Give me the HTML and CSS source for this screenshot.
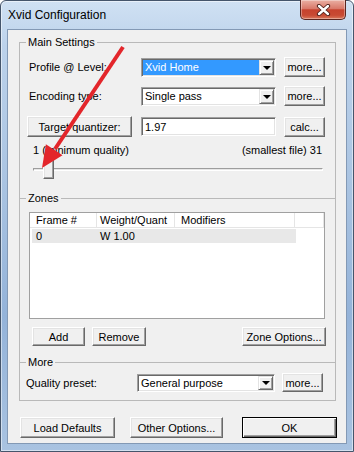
FILE: index.html
```html
<!DOCTYPE html>
<html lang="en">
  <head>
    <meta charset="utf-8" />
    <title>Xvid Configuration</title>
    <link rel="stylesheet" href="styles.css">
  </head>
  <body>
    <div class="window">
      <div class="titlebar">
        <span class="title">Xvid Configuration</span>
        <button class="close" aria-label="Close">
          <svg width="15" height="12" viewBox="0 0 15 12">
            <path d="M3 2 L12 10 M12 2 L3 10" stroke="#4a1e18" stroke-width="4.2" stroke-linecap="round" fill="none" />
            <path d="M3 2 L12 10 M12 2 L3 10" stroke="#ffffff" stroke-width="2.4" stroke-linecap="round" fill="none" />
          </svg>
        </button>
      </div>

      <div class="client">
        <fieldset class="group main">
          <legend>Main Settings</legend>
          <div class="row first">
            <span class="label">Profile @ Level:</span>
            <div class="combo selected">
              <span class="combo-value">Xvid Home</span>
              <span class="combo-drop"></span>
            </div>
            <button class="btn side">more...</button>
          </div>
          <div class="row">
            <span class="label">Encoding type:</span>
            <div class="combo">
              <span class="combo-value">Single pass</span>
              <span class="combo-drop"></span>
            </div>
            <button class="btn side">more...</button>
          </div>
          <div class="row quant-row">
            <button class="btn quant">Target quantizer:</button>
            <input class="field" type="text" value="1.97" />
            <button class="btn side">calc...</button>
          </div>
          <div class="range-labels">
            <span>1 (minimum quality)</span>
            <span>(smallest file) 31</span>
          </div>
          <div class="slider">
            <div class="track"></div>
            <div class="thumb"></div>
          </div>
        </fieldset>

        <fieldset class="group zones">
          <legend>Zones</legend>
          <div class="list">
            <div class="list-head">
              <span>Frame #</span>
              <span class="col-2">Weight/Quant</span>
              <span class="col-3">Modifiers</span>
              <span></span>
            </div>
            <div class="list-row">
              <span>0</span>
              <span class="col-2">W 1.00</span>
              <span></span>
            </div>
          </div>
          <div class="zone-actions">
            <button class="btn add">Add</button>
            <button class="btn remove">Remove</button>
            <button class="btn zone-options">Zone Options...</button>
          </div>
        </fieldset>

        <fieldset class="group more">
          <legend>More</legend>
          <div class="row preset-row">
            <span class="label">Quality preset:</span>
            <div class="combo">
              <span class="combo-value">General purpose</span>
              <span class="combo-drop"></span>
            </div>
            <button class="btn side">more...</button>
          </div>
        </fieldset>

        <div class="footer">
          <button class="btn load">Load Defaults</button>
          <button class="btn other">Other Options...</button>
          <button class="btn ok">OK</button>
        </div>
      </div>

      <!-- annotation arrow drawn over the dialog -->
      <svg class="arrow" width="354" height="452" viewBox="0 0 354 452">
        <line x1="123" y1="47" x2="55" y2="149" stroke="#e3262b" stroke-width="4" />
        <polygon points="42,168 62.5,155.2 45.9,144.2" fill="#e3262b" />
      </svg>
    </div>
  </body>
</html>
```

FILE: styles.css
```css
* {
  margin: 0;
  padding: 0;
  box-sizing: border-box;
}
body {
  width: 354px;
  height: 452px;
  overflow: hidden;
  background: #ffffff;
  font-family: "Liberation Sans", Arial, sans-serif;
  font-size: 11px;
  color: #000000;
}
button,
input {
  font: inherit;
  color: inherit;
}

/* window frame */
.window {
  position: relative;
  width: 354px;
  height: 452px;
  display: flex;
  flex-direction: column;
  padding: 0 6px 7px;
  border: 1px solid #45556b;
  border-radius: 6px 6px 0 0;
  background: linear-gradient(180deg, #d0e1f3 0%, #bcd2eb 10%, #aac4e2 40%, #94b3d9 70%, #a9c3e1 100%);
  box-shadow: inset 0 0 0 1px rgba(255, 255, 255, 0.5);
}
.titlebar {
  height: 28px;
  flex-shrink: 0;
  display: flex;
  align-items: flex-start;
}
.title {
  margin: 7px 0 0 1px;
  font-size: 12px;
  line-height: 14px;
}
.close {
  margin: -1px 1px 0 auto;
  width: 46px;
  height: 20px;
  display: flex;
  align-items: center;
  justify-content: center;
  border: 1px solid #5a2620;
  border-top: none;
  border-radius: 0 0 5px 5px;
  background: linear-gradient(180deg, #eab0a3 0%, #d9796a 45%, #c6432e 52%, #c84a33 80%, #d9785c 100%);
  box-shadow: inset 0 0 0 1px rgba(255, 255, 255, 0.35);
}

.client {
  flex: 1;
  display: flex;
  flex-direction: column;
  padding: 6px 10px 0 11px;
  border: 1px solid #8399b5;
  background: #f0f0f0;
}

/* group boxes */
.group {
  min-width: 0;
  padding: 0 10px 0 9px;
  border: 1px solid #b9b9b9;
  border-bottom: none;
}
.group legend {
  margin-left: -3px;
  padding: 0 2px;
  line-height: 13px;
}
.main {
  padding-bottom: 18px;
}
.zones {
  margin-top: -6px;
  padding-bottom: 16px;
}
.more {
  margin-top: -6px;
  padding-bottom: 8px;
  border-bottom: 1px solid #b9b9b9;
}

/* rows */
.row {
  display: flex;
  align-items: center;
  height: 20px;
  margin-top: 9px;
}
.row.first {
  margin-top: 8px;
}
.quant-row {
  height: 21px;
  margin-top: 10px;
}
.label {
  width: 112px;
  flex-shrink: 0;
}

/* classic controls */
.btn {
  height: 20px;
  flex-shrink: 0;
  background: #f0f0f0;
  border: 1px solid;
  border-color: #ffffff #696969 #696969 #ffffff;
  box-shadow: inset -1px -1px #a0a0a0, inset 1px 1px #e3e3e3;
  text-align: center;
  cursor: pointer;
}
.side {
  width: 41px;
  margin-left: 8px;
}
.quant {
  width: 105px;
  height: 21px;
  margin: 0 9px 0 -2px;
}

.combo {
  width: 135px;
  height: 19px;
  flex-shrink: 0;
  display: flex;
  padding: 1px;
  background: #ffffff;
  border: 1px solid;
  border-color: #a0a0a0 #ffffff #ffffff #a0a0a0;
  box-shadow: inset 1px 1px #696969, inset -1px -1px #e3e3e3;
}
.combo-value {
  flex: 1;
  padding-left: 2px;
  line-height: 15px;
}
.combo.selected .combo-value {
  background: #3399ff;
  color: #ffffff;
}
.combo-drop {
  width: 15px;
  display: flex;
  align-items: center;
  justify-content: center;
  background: #f0f0f0;
  border: 1px solid;
  border-color: #e3e3e3 #696969 #696969 #e3e3e3;
  box-shadow: inset 1px 1px #ffffff, inset -1px -1px #a0a0a0;
}
.combo-drop::after {
  content: "";
  border-left: 4px solid transparent;
  border-right: 4px solid transparent;
  border-top: 4px solid #000000;
  margin-top: 1px;
}

.field {
  width: 135px;
  height: 19px;
  padding: 0 3px;
  background: #ffffff;
  border: 1px solid;
  border-color: #a0a0a0 #ffffff #ffffff #a0a0a0;
  box-shadow: inset 1px 1px #696969, inset -1px -1px #e3e3e3;
  outline: none;
}

/* quality slider */
.range-labels {
  display: flex;
  justify-content: space-between;
  margin-top: 6px;
  padding: 0 3px 0 4px;
  line-height: 14px;
}
.slider {
  position: relative;
  height: 21px;
  margin: 2px 2px 0 4px;
}
.track {
  position: absolute;
  top: 9px;
  left: 0;
  right: 0;
  height: 3px;
  background: #e6e6e6;
  border: 1px solid;
  border-color: #9d9d9d #ffffff #ffffff #9d9d9d;
}
.thumb {
  position: absolute;
  top: 0;
  left: 10px;
  width: 11px;
  height: 20px;
  background: #f0f0f0;
  border: 1px solid;
  border-color: #ffffff #696969 #696969 #ffffff;
  box-shadow: inset -1px -1px #a0a0a0, inset 1px 1px #e3e3e3;
}

/* zones list */
.list {
  height: 107px;
  margin-top: 7px;
  background: #ffffff;
  border: 1px solid #a0a0a0;
}
.list-head {
  display: grid;
  grid-template-columns: 67px 78px 120px 1fr;
  height: 15px;
  line-height: 14px;
  border-bottom: 1px solid #e5e5e5;
}
.list-head span {
  padding-left: 6px;
  border-right: 1px solid #e5e5e5;
}
.list-head .col-2 {
  padding-left: 3px;
}
.list-row {
  display: grid;
  grid-template-columns: 65px 78px 121px;
  width: 264px;
  height: 14px;
  margin: 1px 0 0 2px;
  line-height: 14px;
  background: #e8e8e8;
}
.list-row span {
  padding-left: 4px;
}
.list-row .col-2 {
  padding-left: 3px;
}

.zone-actions {
  display: flex;
  height: 19px;
  margin-top: 8px;
  padding-left: 3px;
}
.zone-actions .btn {
  height: 19px;
}
.add {
  width: 53px;
}
.remove {
  width: 54px;
  margin-left: 7px;
}
.zone-options {
  width: 84px;
  margin: 0 -1px 0 auto;
}

/* more */
.preset-row {
  height: 19px;
  margin-top: 4px;
}
.preset-row .label {
  width: 111px;
  margin-left: -3px;
}
.preset-row .combo {
  width: 138px;
  height: 18px;
}
.preset-row .side {
  height: 19px;
  margin-left: 7px;
}

/* dialog buttons */
.footer {
  display: flex;
  margin-top: 16px;
  padding-left: 1px;
}
.footer .btn {
  height: 21px;
}
.load {
  width: 95px;
}
.other {
  width: 93px;
  margin-left: 15px;
}
.ok {
  width: 95px;
  margin-left: 19px;
  border: 1px solid #000000;
  box-shadow: inset 1px 1px #ffffff, inset -1px -1px #696969, inset -2px -2px #a0a0a0;
}

.arrow {
  position: absolute;
  left: -1px;
  top: -1px;
  pointer-events: none;
}
```
